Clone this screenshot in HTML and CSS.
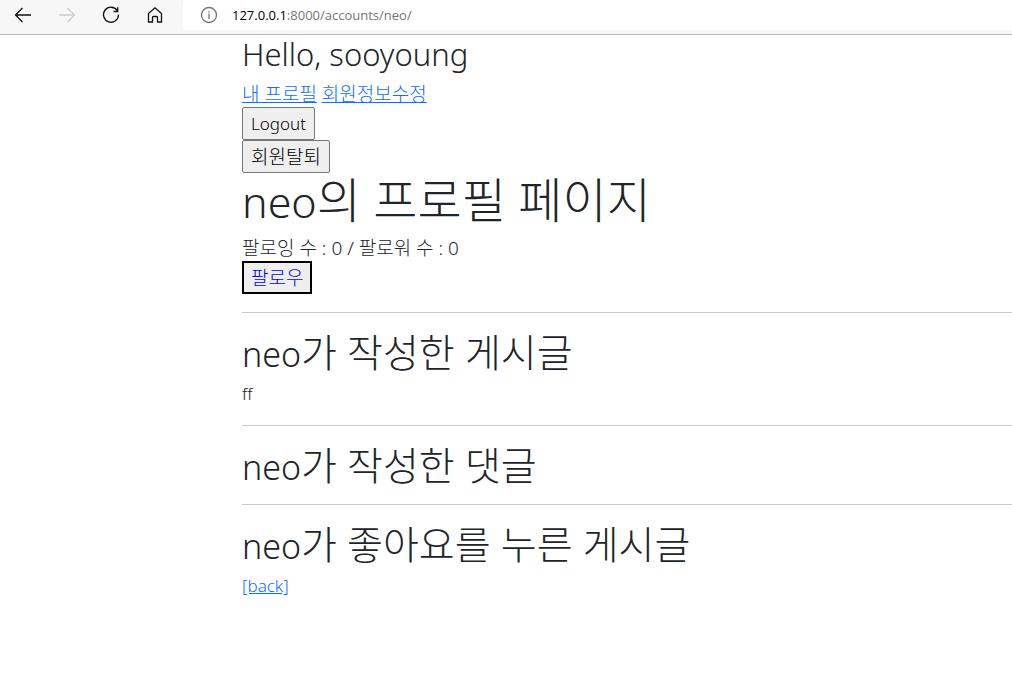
FILE: index.html
```html
<!DOCTYPE html>
<html lang="ko">
<head>
<meta charset="utf-8">
<meta name="viewport" content="width=device-width, initial-scale=1">
<title>neo의 프로필 페이지</title>
<link rel="stylesheet" href="styles.css">
</head>
<body>
<header class="toolbar">
  <nav class="nav-buttons" aria-label="Browser">
    <button class="nav-button" type="button" aria-label="Back"><svg class="icon" viewBox="0 0 20 20"><path d="M18 10H2.5M9.5 3L2.5 10L9.5 17"/></svg></button>
    <button class="nav-button" type="button" aria-label="Forward" disabled><svg class="icon" viewBox="0 0 20 20"><path d="M2 10H17.5M10.500 3L17.500 10L10.500 17"/></svg></button>
    <button class="nav-button" type="button" aria-label="Refresh"><svg class="icon" viewBox="0 0 20 20"><path d="M16.200 5.500A7.500 7.500 0 1 0 17.500 9.500M16.700 2.300V6.500H12.500"/></svg></button>
    <button class="nav-button" type="button" aria-label="Home"><svg class="icon" viewBox="0 0 20 20"><path d="M3.500 8.500L10 2.800L16.500 8.500V17H12.500V12.500Q12.500 11.500 11.500 11.500H8.500Q7.500 11.500 7.500 12.500V17H3.500Z"/></svg></button>
  </nav>
  <div class="address">
    <svg class="icon icon-info" viewBox="0 0 20 20"><circle cx="10" cy="10" r="7.500"/><path d="M10 8.500V14M10 6V7.500"/></svg>
    <span class="url"><span class="host">127.0.0.1</span>:8000/accounts/neo/</span>
  </div>
</header>
<main class="page">
  <h3 class="greeting">Hello, sooyoung</h3>
  <div class="links korean"><a href="#profile">내 프로필</a> <a href="#edit">회원정보수정</a></div>
  <form class="action"><button class="button" type="button">Logout</button></form>
  <form class="action korean"><button class="button" type="button">회원탈퇴</button></form>
  <h1 class="title" id="profile"><span class="title-name">neo</span>의 프로필 페이지</h1>
  <div class="counts korean">팔로잉 수 : 0 / 팔로워 수 : 0</div>
  <form class="action korean"><button class="button button-follow" type="button">팔로우</button></form>
  <hr class="rule">
  <h2 class="heading"><span class="heading-name">neo</span>가 작성한 게시글</h2>
  <div class="post">ff</div>
  <hr class="rule">
  <h2 class="heading"><span class="heading-name">neo</span>가 작성한 댓글</h2>
  <hr class="rule">
  <h2 class="heading"><span class="heading-name">neo</span>가 좋아요를 누른 게시글</h2>
  <a href="#back">[back]</a>
</main>
</body>
</html>
```
FILE: styles.css
```css
* {
  box-sizing: border-box;
}

body {
  margin: 0;
  background: #fff;
  color: #212529;
  font-family: "Noto Sans", "Noto Sans CJK KR", sans-serif;
  font-size: 17px;
  font-weight: 300;
  line-height: 26px;
}

.toolbar {
  display: flex;
  height: 35px;
  background: #f7f7f7;
  border-bottom: 1px solid #bababa;
}

.nav-buttons {
  display: flex;
  gap: 24px;
  width: 183px;
  padding: 5px 0 9px 13px;
}

.nav-button {
  display: flex;
  padding: 0;
  border: 0;
  background: none;
  color: #111;
}

.nav-button:disabled {
  color: #ccc;
}

.icon {
  width: 20px;
  height: 20px;
  fill: none;
  stroke: currentColor;
  stroke-width: 1.3;
}

.address {
  display: flex;
  flex: 1;
  align-items: center;
  gap: 13px;
  height: 30px;
  padding-left: 16px;
  border-radius: 4px 0 0 4px;
  background: #fff;
}

.icon-info {
  color: #767676;
}

.url {
  color: #767676;
  font-family: "Open Sans", sans-serif;
  font-size: 13px;
  font-weight: 400;
  line-height: 20px;
}

.host {
  color: #000;
}

.page {
  margin-left: 242px;
}

h1,
h2,
h3 {
  margin: 0 0 8px;
  font-weight: 300;
}

.greeting {
  font-size: 31px;
  line-height: 38px;
}

.title {
  font-size: 48px;
  line-height: 54px;
}

.title-name {
  font-size: 43px;
  line-height: 1;
}

.heading {
  font-size: 39px;
  line-height: 42px;
}

.heading-name {
  font-size: 34px;
  line-height: 1;
}

.korean {
  font-size: 19px;
}

a {
  color: #0d6efd;
}

.action {
  display: flex;
}

.button {
  height: 33px;
  padding: 0 8px;
  border: 1px solid #767676;
  border-radius: 2px;
  background: #efefef;
  color: #000;
  font: inherit;
}

.button-follow {
  border: 2px solid #000;
  border-radius: 0;
  padding: 0 7px;
  color: #00f;
}

.rule {
  margin: 18px 0;
  border: 0;
  border-top: 1px solid #c8c9ca;
}
```
